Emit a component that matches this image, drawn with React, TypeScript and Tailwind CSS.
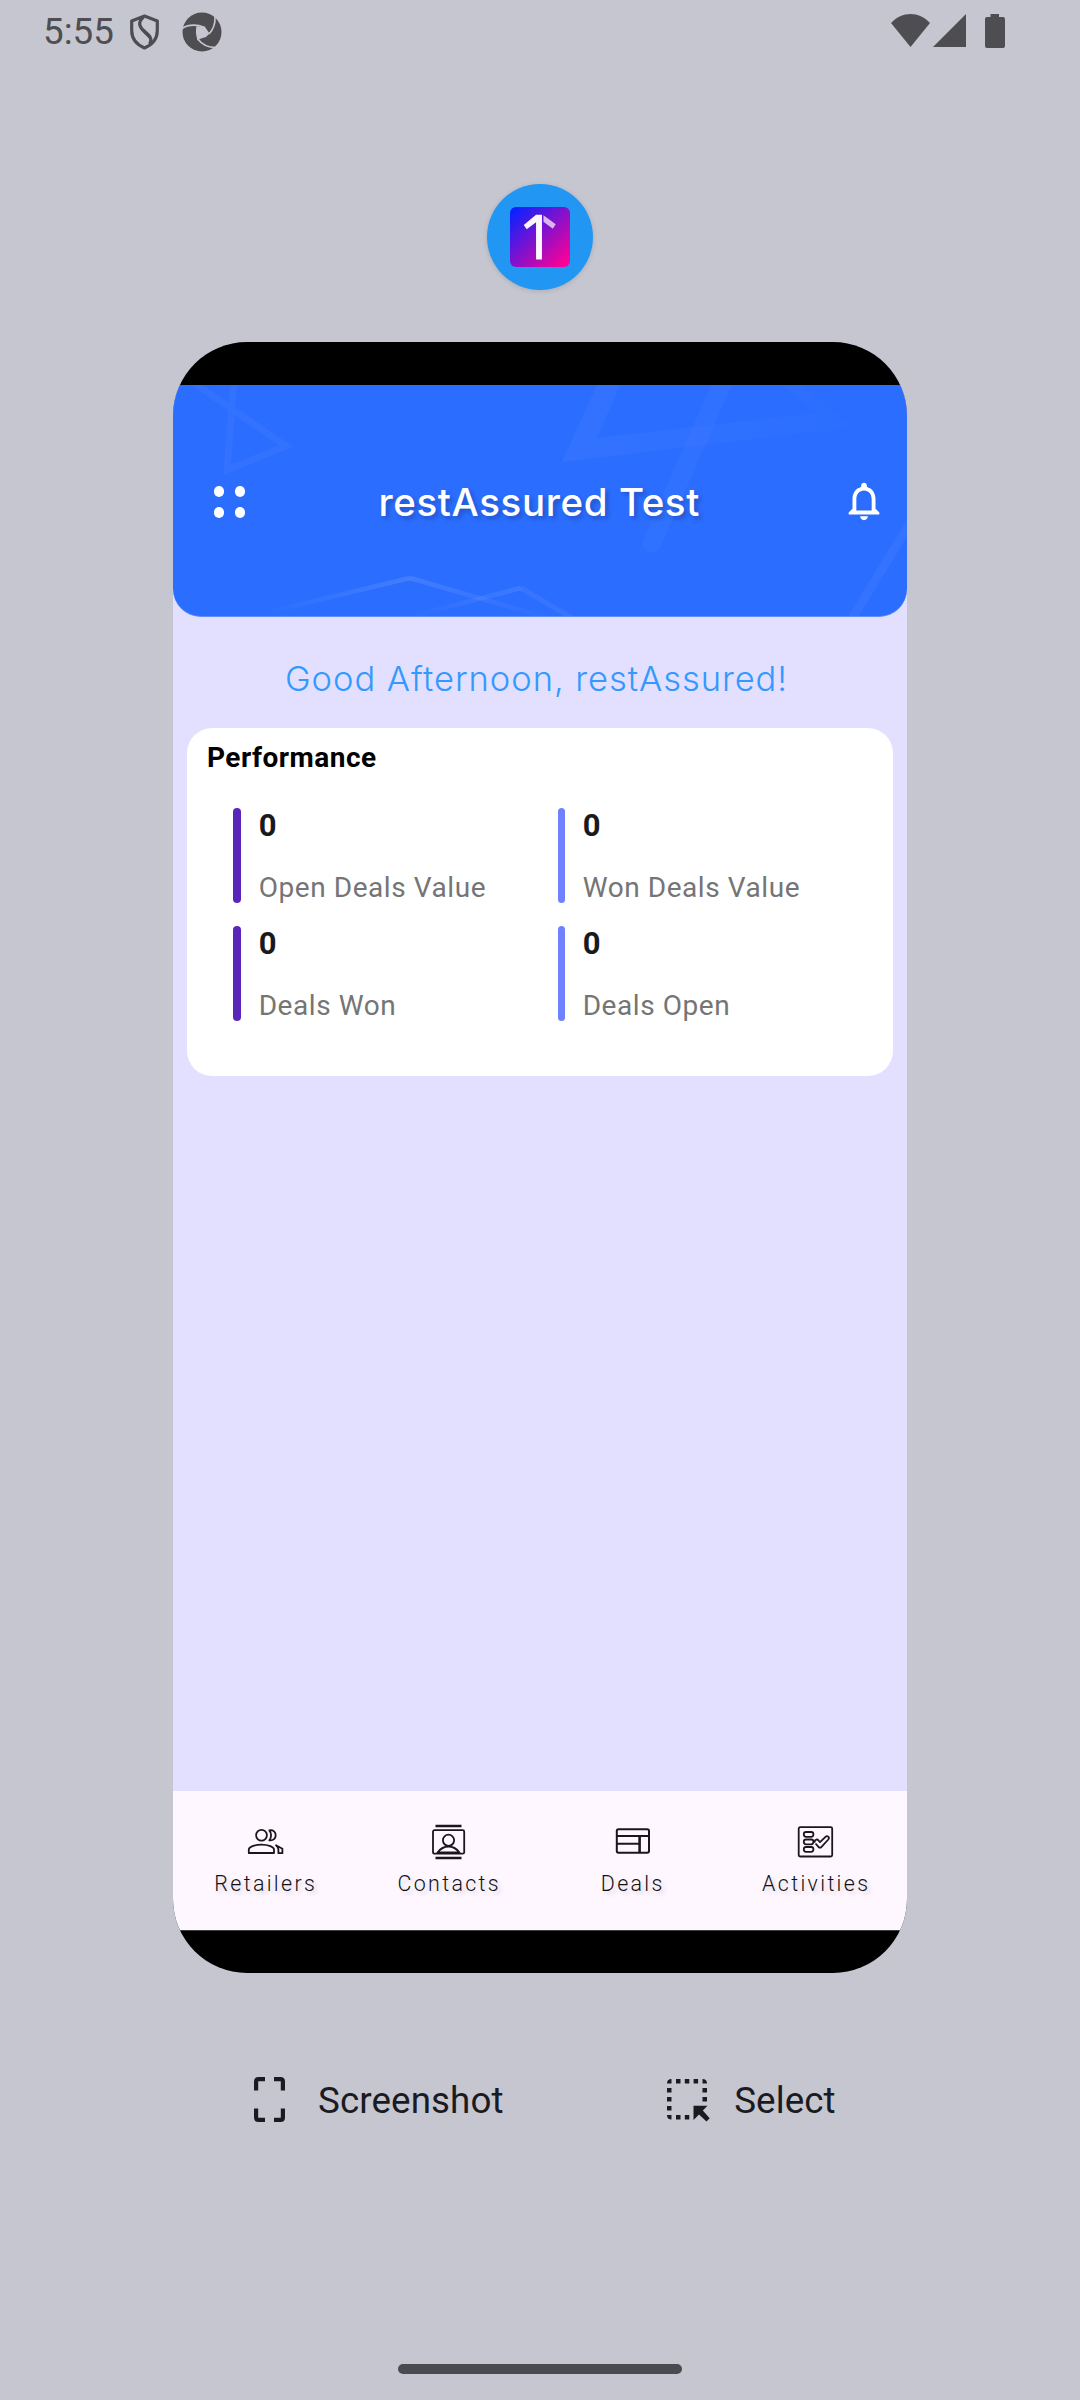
import React from "react";

function StatusBar() {
  return (
    <header className="flex h-[63px] items-center pl-[43px] pr-[75px] text-[#4e4d52]">
      <span className="w-[87px] text-[36.75px] leading-[63px]">5:55</span>
      <svg width="30" height="36" viewBox="0 0 30 36" fill="none" stroke="currentColor" strokeWidth="3.2" strokeLinejoin="round">
        <path d="M14.5 2 27.3 7V16.5C27.3 24.5 22.5 30.5 14.5 34 6.500 30.500 1.700 24.500 1.700 16.500V7Z" />
        <path d="M13.500 3C9.500 6.500 8 10.500 12 15L18.500 21C21.500 24 21.500 27 19.500 30" />
        <path d="M10 5C9 12 10 15 14 18.500L19 23.500" strokeWidth="1.500" />
      </svg>
      <svg className="ml-[22px]" width="40" height="40" viewBox="0 0 40 40">
        <circle cx="20" cy="20" r="19.500" fill="currentColor" />
        <path d="M15 14.500 23 15 27.500 21.500 24 25 16 27.500 14.500 21Z" fill="#c6c6d0" />
        <g fill="none" stroke="#c6c6d0" strokeWidth="1.600">
          <path d="M0 16.500C6 12.500 14 12 23 15.500" />
          <path d="M33 4.500C33.500 11 32 16.500 27 22" />
          <path d="M36 35.500C27 36 20 33 15.500 26.500" />
          <path d="M15.500 14C14 19 14.500 23 16.500 28.500" />
        </g>
      </svg>
      <svg className="mb-[1px] ml-auto" width="39" height="34" viewBox="0 0 39 34">
        <path d="M0 9C11-3 28-3 39 9L19.500 33Z" fill="currentColor" />
      </svg>
      <svg className="mb-[1px] ml-[3px]" width="33" height="34" viewBox="0 0 33 34">
        <path d="M33 0V33H0Z" fill="currentColor" />
      </svg>
      <svg className="mb-[1px] ml-[19px]" width="20" height="34" viewBox="0 0 20 34">
        <path d="M5.500 0H14V3H18Q20 3 20 5V32Q20 34 18 34H2Q0 34 0 32V5Q0 3 2 3H5.500Z" fill="currentColor" />
      </svg>
    </header>
  );
}

function AppIcon() {
  return (
    <div className="mx-auto mt-[121px] flex size-[106px] items-center justify-center rounded-full bg-[#2196f3] shadow-[0_1px_5px_rgba(0,0,0,0.14)]">
      <svg className="mb-[1px]" width="60" height="60" viewBox="0 0 61 61">
        <defs>
          <linearGradient id="logo" x1="0" y1="0" x2="1" y2="1">
            <stop offset="0.06" stopColor="#0a22ff" />
            <stop offset="0.920" stopColor="#fb0098" />
          </linearGradient>
        </defs>
        <rect width="61" height="61" rx="6" fill="url(#logo)" />
        <path d="M26.500 8H32.500V53.500H26.500V15.500L17 22.500 14 18.300Z" fill="#fbf8fd" />
        <path d="M34 8.500 46.500 17.500 43.500 22 34 15Z" fill="#dcb4ec" />
      </svg>
    </div>
  );
}

function HeaderPattern() {
  return (
    <svg className="absolute inset-0" width="734" height="232" viewBox="0 0 734 232" fill="none">
      <defs>
        <linearGradient id="fadeA" gradientUnits="userSpaceOnUse" x1="389" y1="77" x2="680" y2="30">
          <stop offset="0" stopColor="#fff" stopOpacity="0.040" />
          <stop offset="1" stopColor="#fff" stopOpacity="0.006" />
        </linearGradient>
        <linearGradient id="fadeB" gradientUnits="userSpaceOnUse" x1="87" y1="0" x2="237" y2="0">
          <stop offset="0" stopColor="#fff" stopOpacity="0" />
          <stop offset="1" stopColor="#fff" stopOpacity="0.110" />
        </linearGradient>
        <linearGradient id="fadeC" gradientUnits="userSpaceOnUse" x1="237" y1="0" x2="372" y2="0">
          <stop offset="0" stopColor="#fff" stopOpacity="0.110" />
          <stop offset="1" stopColor="#fff" stopOpacity="0.010" />
        </linearGradient>
        <linearGradient id="fadeD" gradientUnits="userSpaceOnUse" x1="235" y1="0" x2="348" y2="0">
          <stop offset="0" stopColor="#fff" stopOpacity="0" />
          <stop offset="1" stopColor="#fff" stopOpacity="0.090" />
        </linearGradient>
      </defs>
      <path d="M15-6 113 61 54 85 61-6" stroke="#fff" strokeOpacity="0.035" strokeWidth="7" />
      <path d="M424 0 389 77 680 42 630 0H608L645 28 424 53 447 0Z" fill="url(#fadeA)" />
      <path d="M552-8 479 158" stroke="#fff" strokeOpacity="0.028" strokeWidth="19" strokeLinecap="round" />
      <path d="M87 229 237 193" stroke="url(#fadeB)" strokeWidth="4.500" />
      <path d="M237 193 372 232" stroke="url(#fadeC)" strokeWidth="4.500" />
      <path d="M235 232 348 203" stroke="url(#fadeD)" strokeWidth="4.500" />
      <path d="M348 203 404 236" stroke="#fff" strokeOpacity="0.060" strokeWidth="5" />
      <path d="M742 130 675 240" stroke="#fff" strokeOpacity="0.045" strokeWidth="9" />
    </svg>
  );
}

function AppHeader() {
  return (
    <div className="relative flex h-[232px] items-start overflow-hidden rounded-b-[28px] border-b border-[#5f90ff] bg-[#2b6dff] pl-[40.500px] pr-[20px]">
      <HeaderPattern />
      <div className="relative mt-[101px] grid grid-cols-2 gap-[10.5px]">
        <i className="size-[10.5px] rounded-full bg-white" />
        <i className="size-[10.5px] rounded-full bg-white" />
        <i className="size-[10.5px] rounded-full bg-white" />
        <i className="size-[10.5px] rounded-full bg-white" />
      </div>
      <h1 className="relative ml-[133.500px] mt-[93px] whitespace-nowrap font-['Inter',sans-serif] text-[38.5px] font-medium leading-[48px] tracking-[0.600px] text-white [text-shadow:3px_3px_4px_rgba(0,0,0,0.22)]">
        restAssured Test
      </h1>
      <svg className="relative ml-auto mt-[93px]" width="46" height="46" viewBox="0 0 24 24" fill="#fff">
        <path d="M12 22c1.100 0 2-.900 2-2h-4c0 1.100.900 2 2 2zm6-6v-5c0-3.070-1.630-5.640-4.500-6.320V4c0-.830-.670-1.500-1.500-1.500s-1.500.670-1.500 1.500v.680C7.640 5.360 6 7.920 6 11v5l-2 2v1h16v-1l-2-2zm-2 1H8v-6c0-2.480 1.510-4.500 4-4.500s4 2.020 4 4.500v6z" />
      </svg>
    </div>
  );
}

function Stat({ label, purple }: { label: string; purple?: boolean }) {
  return (
    <div className="flex h-[94.5px]">
      <span className={purple ? "w-[8px] rounded-full bg-[#5a25b9]" : "w-[7.500px] rounded-full bg-[#6e82ff]"} />
      <div className="ml-[17.500px]">
        <div className="text-[31px] font-bold leading-[36px] text-[#1a1a1a]">0</div>
        <div className="mt-[25.500px] whitespace-nowrap text-[28px] leading-[36px] tracking-[0.560px] text-[#757575]">{label}</div>
      </div>
    </div>
  );
}

function PerformanceCard() {
  return (
    <section className="mx-[14px] mt-[22px] h-[348px] rounded-[25px] bg-white">
      <h2 className="pl-[20px] pt-[11.500px] text-[28px] font-bold leading-[36px] tracking-[0.500px] text-black">Performance</h2>
      <div className="ml-[46.200px] mt-[32.500px] grid grid-cols-[324.500px_1fr] gap-y-[23.500px]">
        <Stat label="Open Deals Value" purple />
        <Stat label="Won Deals Value" />
        <Stat label="Deals Won" purple />
        <Stat label="Deals Open" />
      </div>
    </section>
  );
}

const RetailersIcon = () => (
  <>
    <circle cx="15.500" cy="13.300" r="5.400" />
    <path d="M2.800 31V27.500C2.800 25 8.500 22.600 15.500 22.600S28 25 28 27.500V31Z" />
    <path d="M23.300 8.300C27.500 7.700 29.700 10.300 29.700 13.300S27.500 19 23.300 18.300C25.700 15.500 25.700 11 23.300 8.300Z" />
    <path d="M30 23.300 36.400 26.700V31.200H32.400V27.500C32.400 25.500 31.500 24.500 30 23.300Z" />
  </>
);

const ContactsIcon = () => (
  <>
    <path d="M6.500 4H32.500M6.500 36H32.500" strokeWidth="2.600" />
    <rect x="4" y="8.200" width="31.200" height="23.500" rx="1.500" />
    <circle cx="19.500" cy="18.300" r="5.600" />
    <path d="M8.500 30.500C12 26 15.500 24.500 19.500 24.500S27 26 30.500 30.500Z" />
  </>
);

const DealsIcon = () => (
  <>
    <rect x="3.800" y="7.200" width="32.200" height="23.600" rx="1.800" strokeWidth="2" />
    <path d="M4 14H36M4 21.700H26.500" strokeWidth="2" />
    <path d="M26.600 14V31" strokeWidth="2.600" />
  </>
);

const ActivitiesIcon = () => (
  <>
    <rect x="2.700" y="5.200" width="33.500" height="29.300" rx="1.500" />
    <rect x="7.800" y="10" width="9.600" height="4.800" rx="2.200" />
    <rect x="7.800" y="17.500" width="9.600" height="4.800" rx="2.200" />
    <rect x="7.800" y="25" width="9.600" height="4.800" rx="2.200" />
    <path d="M17.400 19.800H18.700C18.700 17 21.500 17 22.500 18.500L24 20.200 29.500 14.800C31.500 13 34 15.500 32.300 17.500L25.500 24.800C24.500 26 23.500 26 22.500 24.800L19.500 21.500" />
  </>
);

const tabs = [
  { label: "Retailers", icon: <RetailersIcon /> },
  { label: "Contacts", icon: <ContactsIcon /> },
  { label: "Deals", icon: <DealsIcon /> },
  { label: "Activities", icon: <ActivitiesIcon /> },
];

function BottomNav() {
  return (
    <nav className="grid h-[140px] grid-cols-4 border-b border-[#3c403c] bg-[#fef7ff]">
      {tabs.map((t) => (
        <div key={t.label} className="flex flex-col items-center pt-[31px]">
          <svg width="38" height="38" viewBox="0 0 38 38" fill="none" stroke="#1a171c" strokeWidth="1.800" strokeLinejoin="round">
            {t.icon}
          </svg>
          <span className="mt-[8.500px] pl-[2px] text-[21.400px] font-light leading-[30px] tracking-[2.350px] text-[#111] [text-shadow:3px_3px_4px_rgba(0,0,0,0.16)]">
            {t.label}
          </span>
        </div>
      ))}
    </nav>
  );
}

function Actions() {
  return (
    <div className="mt-[103px] flex h-[49px] items-center text-[36.75px] leading-[49px] text-[#1a1b20]">
      <svg className="mb-[3px] ml-[254px]" width="31" height="45" viewBox="0 0 31 45" fill="none" stroke="currentColor" strokeWidth="4.200">
        <path d="M2.100 13.500V4.500Q2.100 2.100 4.500 2.100H11M20 2.100H26.500Q28.900 2.100 28.900 4.500V13.500M28.900 31.500V40.500Q28.900 42.900 26.500 42.900H20M11 42.900H4.500Q2.100 42.900 2.100 40.500V31.500" />
      </svg>
      <span className="ml-[33px] tracking-[0.100px]">Screenshot</span>
      <svg className="ml-[163px]" width="43" height="43" viewBox="0 0 43 43" fill="currentColor">
        <path d="M0 4.500Q0 0 4.500 0V4.500Z M35.500 0Q40 0 40 4.500H35.500Z M0 36H4.500V40.500Q0 40.500 0 36Z" />
        <path d="M9 0h4.500v4.500H9zM17.800 0h4.500v4.500h-4.500zM26.600 0h4.500v4.500h-4.500zM0 9h4.500v4.500H0zM0 18h4.500v4.500H0zM0 27h4.500v4.500H0zM35.500 9H40v4.500h-4.500zM35.500 18H40v4.500h-4.500zM9 36h4.500v4.500H9zM17.800 36h4.500v4.500h-4.500z" />
        <path d="M26.500 26.800H40.500L35.800 31.600 42.700 39.300 39.500 42.600 32 35.500 26.500 41Z" />
      </svg>
      <span className="ml-[24.500px] tracking-[0.100px]">Select</span>
    </div>
  );
}

export default function App() {
  return (
    <div className="flex h-[2400px] w-[1080px] flex-col overflow-hidden bg-[#c6c6d0] font-['Roboto',sans-serif]">
      <StatusBar />
      <AppIcon />
      <main className="mx-auto mt-[52px] flex h-[1631px] w-[734px] shrink-0 flex-col overflow-hidden rounded-[74px] bg-black pt-[43px]">
        <div className="flex h-[1406px] flex-col bg-[#e2dfff]">
          <AppHeader />
          <p className="mt-[35px] pr-[7px] text-center font-['Inter',sans-serif] text-[34.500px] font-light leading-[54px] tracking-[0.950px] text-[#3399ff]">
            Good Afternoon, restAssured!
          </p>
          <PerformanceCard />
        </div>
        <BottomNav />
      </main>
      <Actions />
      <div className="mx-auto mt-auto mb-[26px] h-[10.500px] w-[284px] rounded-full bg-[#4b4a50]" />
    </div>
  );
}
